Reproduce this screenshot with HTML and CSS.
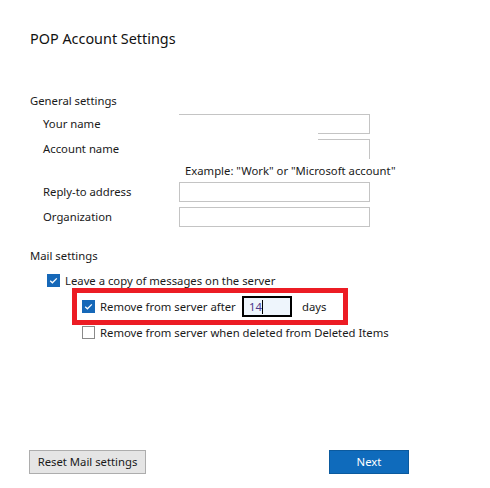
FILE: index.html
```html
<!DOCTYPE html>
<html>
<head>
<meta charset="utf-8">
<link rel="stylesheet" href="styles.css">
</head>
<body>
<div class="page">
  <h1 class="title">POP Account Settings</h1>
  <div class="section-head general">General settings</div>
  <div class="form">
    <div class="label">Your name</div>
    <div class="field glitch1"></div>
    <div class="label">Account name</div>
    <div class="field glitch2"></div>
    <div class="label"></div>
    <div class="example">Example: "Work" or "Microsoft account"</div>
    <div class="label">Reply-to address</div>
    <div class="field"></div>
    <div class="label">Organization</div>
    <div class="field"></div>
  </div>
  <div class="section-head mail">Mail settings</div>
  <div class="check-row level1">
    <span class="cb checked"><svg viewBox="0 0 13 13" width="13" height="13"><path d="M3.2 6.8 L5.4 8.8 L9.8 4.4" fill="none" stroke="#fff" stroke-width="1.3"/></svg></span>
    <span class="cb-text">Leave a copy of messages on the server</span>
  </div>
  <div class="highlight">
    <div class="check-row inner">
      <span class="cb checked"><svg viewBox="0 0 13 13" width="13" height="13"><path d="M3.2 6.8 L5.4 8.8 L9.8 4.4" fill="none" stroke="#fff" stroke-width="1.3"/></svg></span>
      <span class="cb-text after-text">Remove from server after</span>
      <span class="days-input"><span class="days-val">14</span><span class="caret"></span></span>
      <span class="days-text">days</span>
    </div>
  </div>
  <div class="check-row level2">
    <span class="cb"></span>
    <span class="cb-text">Remove from server when deleted from Deleted Items</span>
  </div>
  <div class="buttons">
    <button class="btn reset">Reset Mail settings</button>
    <button class="btn next">Next</button>
  </div>
</div>
</body>
</html>
```
FILE: styles.css
```css
* { box-sizing: border-box; }
html, body { margin: 0; padding: 0; background: #fff; }
body {
  font-family: "Noto Sans", "Open Sans", sans-serif;
  font-size: 11.3px;
  color: #1a1a1a;
  width: 490px;
  height: 488px;
  overflow: hidden;
}
.page { padding-left: 30px; padding-top: 29px; }
.title {
  margin: 0;
  font-size: 14.4px;
  font-weight: normal;
  line-height: 20px;
  height: 20px;
  color: #111;
}
.section-head { line-height: 16px; height: 16px; }
.general { margin-top: 44px; }
.form {
  margin-top: 5px;
  display: grid;
  grid-template-columns: 136px 191px;
  grid-template-rows: 20px 20px 13px 20px 20px;
  row-gap: 5px;
  padding-left: 13px;
}
.label { line-height: 20px; }
.field {
  border: 1px solid #c4c4c4;
  height: 20px;
  background: #fff;
}
.field.glitch1 {
  border-left: none;
  border-bottom: none;
  background: linear-gradient(#c4c4c4, #c4c4c4) right bottom / 51px 1px no-repeat;
}
.field.glitch2 {
  border: none;
  border-right: 1px solid #c4c4c4;
  background: linear-gradient(#c4c4c4, #c4c4c4) right top / 51px 1px no-repeat;
}
.example {
  line-height: 13px;
  margin-left: 6px;
  white-space: nowrap;
}
.mail { margin-top: 21px; }
.check-row {
  display: flex;
  align-items: center;
  white-space: nowrap;
}
.level1 { margin-top: 8px; padding-left: 17px; height: 16px; }
.level2 { padding-left: 52px; height: 15px; }
.cb {
  width: 13px;
  height: 13px;
  border: 1px solid #8a8a8a;
  background: #fff;
  flex: none;
  display: block;
  margin-right: 5px;
}
.cb svg { display: block; }
.cb.checked { background: #1668b8; border-color: #1668b8; }
.cb.checked svg { margin: -1px; }
.highlight {
  margin-left: 42px;
  width: 276px;
  height: 37px;
  border: 5px solid #ec1c24;
}
.inner { height: 27px; padding-left: 5px; }
.after-text { width: 128px; flex: none; }
.days-input {
  margin-left: 14px;
  width: 50px;
  height: 21px;
  border: 2px solid #000;
  background: #eef5fc;
  display: flex;
  align-items: center;
  padding-left: 5px;
  flex: none;
}
.days-val { color: #4b3a8c; }
.caret { width: 1px; height: 14px; background: #000; }
.days-text { margin-left: 10px; }
.buttons {
  margin-top: 110px;
  display: flex;
  margin-left: -1px;
}
.btn {
  font-family: inherit;
  font-size: 11.3px;
  height: 24px;
  padding: 0;
  line-height: 20px;
}
.reset {
  width: 117px;
  background: #e5e5e5;
  border: 1px solid #adadad;
  color: #1a1a1a;
}
.next {
  margin-left: 183px;
  width: 80px;
  background: #0f6bbc;
  border: 1px solid #0b5a9e;
  color: #fff;
}
```
